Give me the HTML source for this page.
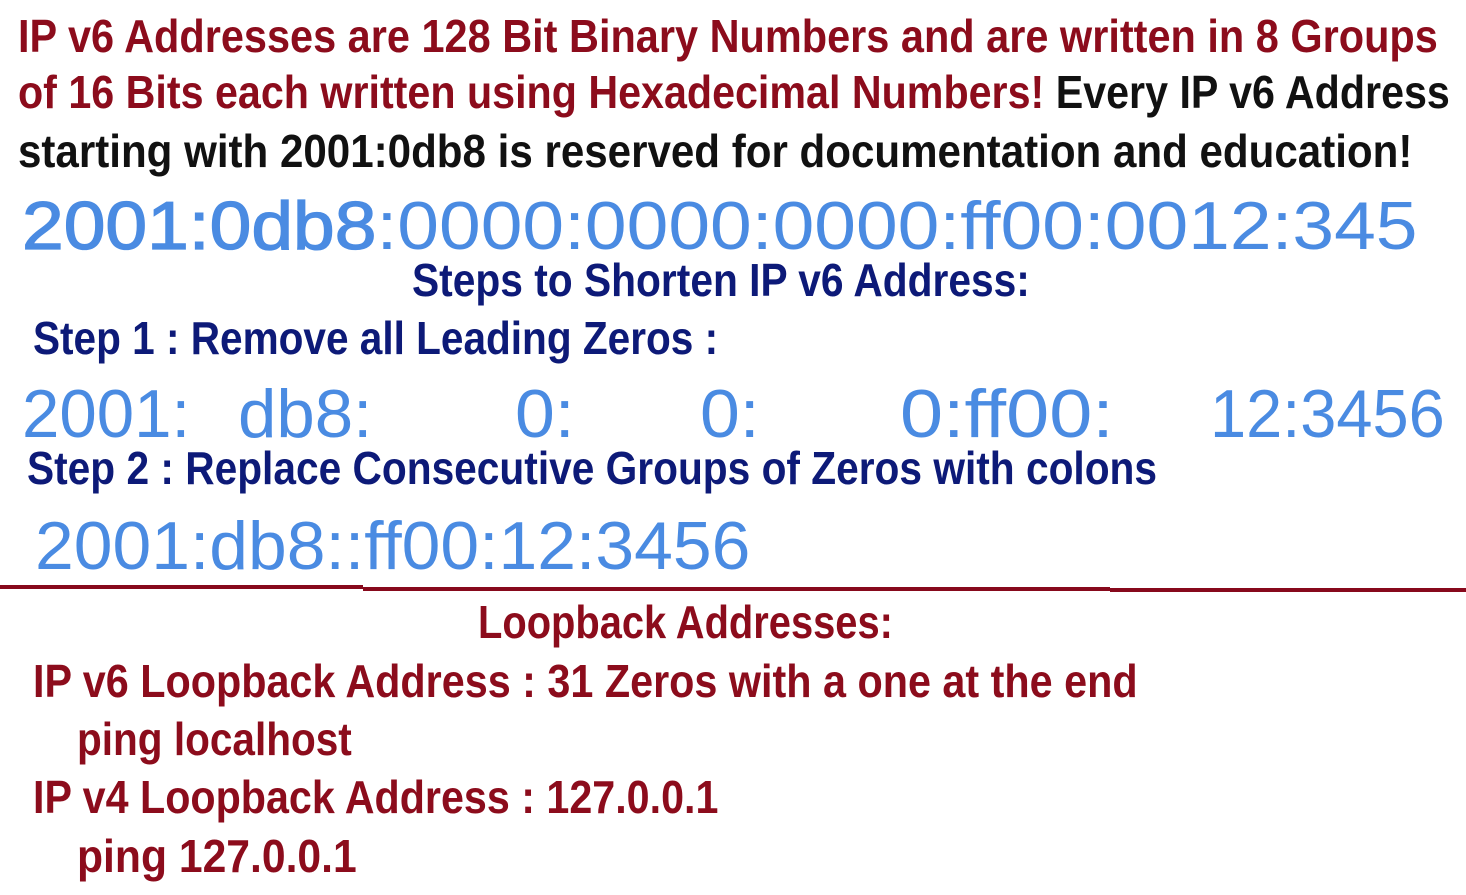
<!DOCTYPE html>
<html><head><meta charset="utf-8"><style>
html,body{margin:0;padding:0;background:#fff;width:1466px;height:895px;overflow:hidden;position:relative}
.t{position:absolute;white-space:nowrap;line-height:1;font-family:"Liberation Sans",sans-serif;font-weight:bold;font-size:46px;transform-origin:0 0}
.r{color:#8c0c1c}.k{color:#111}.n{color:#0d1a78}
.b{color:#4a8be2;font-size:68px;font-weight:normal}
.sb{font-weight:normal;-webkit-text-stroke:1.3px #4a8be2}
.bar{position:absolute;background:#87091c;height:4px}
</style></head><body>
<div class="t r" style="left:18px;top:13px;--w:1420">IP v6 Addresses are 128 Bit Binary Numbers and are written in 8 Groups</div>
<div class="t r" style="left:18px;top:69px;--w:1432">of 16 Bits each written using Hexadecimal Numbers! <span class="k">Every IP v6 Address</span></div>
<div class="t k" style="left:18px;top:128px;--w:1394">starting with 2001:0db8 is reserved for documentation and education!</div>
<div class="t b" style="left:22px;top:192px;--w:1396"><span class="sb">2001:0db8</span>:0000:0000:0000:ff00:0012:345</div>
<div class="t n" style="left:412px;top:257px;--w:618">Steps to Shorten IP v6 Address:</div>
<div class="t n" style="left:33px;top:315px;--w:685">Step 1 : Remove all Leading Zeros :</div>
<div class="t b" style="left:22px;top:380px;--w:168">2001:</div>
<div class="t b" style="left:238px;top:380px;--w:134">db8:</div>
<div class="t b" style="left:515px;top:380px;--w:60">0:</div>
<div class="t b" style="left:700px;top:380px;--w:60">0:</div>
<div class="t b" style="left:900px;top:380px;--w:214">0:ff00:</div>
<div class="t b" style="left:1210px;top:380px;--w:235">12:3456</div>
<div class="t n" style="left:27px;top:445px;--w:1130">Step 2 : Replace Consecutive Groups of Zeros with colons</div>
<div class="t b" style="left:35px;top:512px;--w:715">2001:db8::ff00:12:3456</div>
<div class="bar" style="left:0;top:585px;width:363px"></div>
<div class="bar" style="left:363px;top:587px;width:747px"></div>
<div class="bar" style="left:1110px;top:588px;width:356px"></div>
<div class="t r" style="left:478px;top:599px;--w:415">Loopback Addresses:</div>
<div class="t r" style="left:33px;top:658px;--w:1105">IP v6 Loopback Address : 31 Zeros with a one at the end</div>
<div class="t r" style="left:77px;top:716px;--w:275">ping localhost</div>
<div class="t r" style="left:33px;top:774px;--w:685">IP v4 Loopback Address : 127.0.0.1</div>
<div class="t r" style="left:77px;top:833px;--w:280">ping 127.0.0.1</div>
<script>
document.querySelectorAll('.t').forEach(function(e){var w=parseFloat(getComputedStyle(e).getPropertyValue('--w'));if(w)e.style.transform='scaleX('+(w/e.offsetWidth)+')';});
</script>
</body></html>
